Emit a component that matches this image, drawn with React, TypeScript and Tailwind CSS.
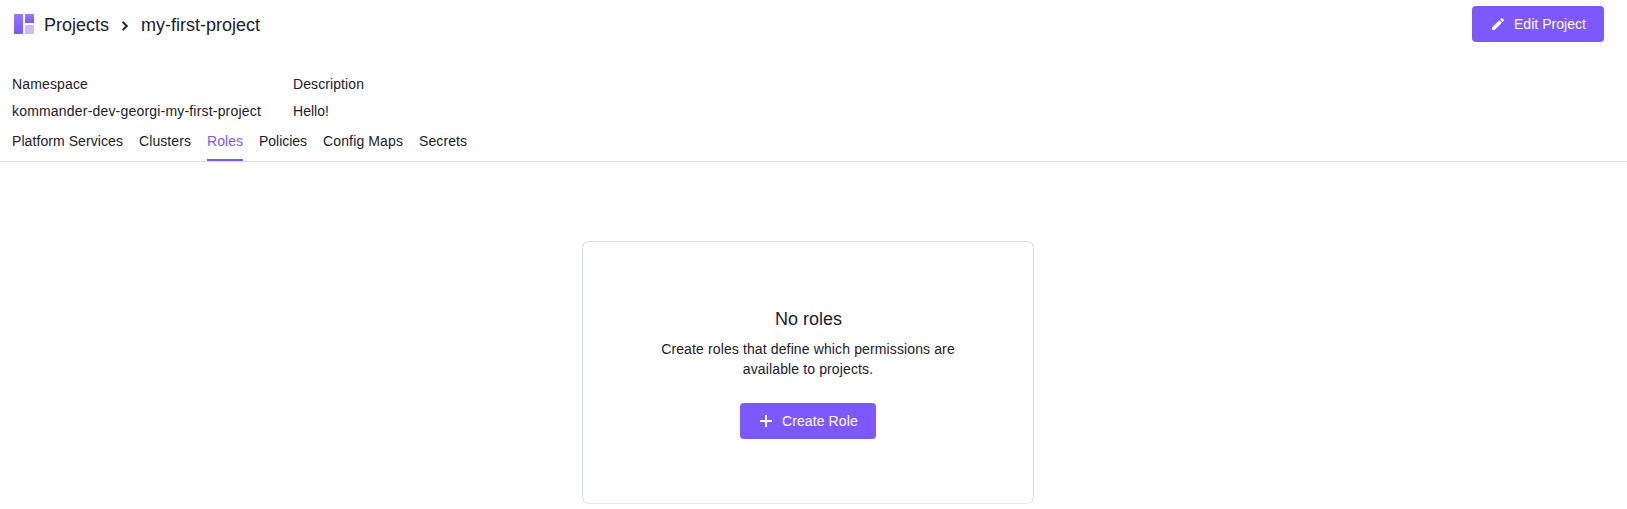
const tabs = [
  { label: "Platform Services", tracking: "tracking-[0.077px]" },
  { label: "Clusters", tracking: "tracking-[0.083px]" },
  { label: "Roles", tracking: "tracking-[0.04px]", active: true },
  { label: "Policies", tracking: "tracking-[-0.03px]" },
  { label: "Config Maps", tracking: "tracking-[0.13px]" },
  { label: "Secrets", tracking: "tracking-[0.077px]" },
];

export default function App() {
  return (
    <div className="h-[509px] w-full overflow-hidden bg-white font-['Liberation_Sans',Arial,sans-serif] text-sm leading-5 text-[#1b2029]">
      <header className="flex h-12 items-center justify-between pl-3 pr-[23px]">
        <div className="flex items-center text-lg">
          <svg className="mr-2 size-6" viewBox="0 0 24 24">
            <defs>
              <linearGradient id="tile" x1="0" y1="0" x2="0" y2="1">
                <stop offset="0" stopColor="#9776FF" />
                <stop offset="1" stopColor="#7D58FF" />
              </linearGradient>
            </defs>
            <rect x="2" y="2" width="9" height="20" rx="0.4" fill="url(#tile)" />
            <rect x="13" y="2" width="9" height="9" rx="0.4" fill="url(#tile)" />
            <rect x="13" y="13" width="9" height="9" rx="0.4" fill="#cbbcff" />
          </svg>
          <span className="pt-0.5">Projects</span>
          <svg className="mx-2 mt-1 size-4" viewBox="0 0 16 16" fill="none" stroke="#1b2029" strokeWidth="2">
            <path d="M5.6 3.9 9.8 8l-4.2 4.1" />
          </svg>
          <span className="pt-0.5">my-first-project</span>
        </div>
        <button className="flex h-9 w-[132px] items-center gap-2 rounded bg-[#7d58ff] pl-[18px] tracking-[0.035px] text-white">
          <svg className="size-4" viewBox="0 0 16 16" fill="currentColor">
            <path d="M2 11.5V14h2.5l7.37-7.37-2.5-2.5zM13.8 4.7a.67.67 0 0 0 0-.94L12.24 2.2a.67.67 0 0 0-.94 0l-1.22 1.22 2.5 2.5z" />
          </svg>
          Edit Project
        </button>
      </header>
      <dl className="mt-[26px] flex gap-8 pl-3">
        <div className="flex w-[249px] flex-col gap-[7px]">
          <dt className="tracking-[0.146px]">Namespace</dt>
          <dd className="whitespace-nowrap tracking-[0.19px]">kommander-dev-georgi-my-first-project</dd>
        </div>
        <div className="flex flex-col gap-[7px]">
          <dt className="tracking-[0.09px]">Description</dt>
          <dd className="tracking-[0.03px]">Hello!</dd>
        </div>
      </dl>
      <nav className="mt-[10px] flex h-[31px] gap-4 border-b border-[#dadde2] pl-3">
        {tabs.map((t) => (
          <a key={t.label} className={`h-[30px] ${t.tracking} ${t.active ? "border-b-2 border-[#7d58ff] text-[#7d58ff]" : ""}`}>
            {t.label}
          </a>
        ))}
      </nav>
      <main className="mt-[79px] flex justify-center pr-[11px]">
        <section className="flex h-[263px] w-[452px] flex-col items-center rounded-[7px] border border-[#dadde2] border-b-[#e8e9ec] pt-[63px] text-center">
          <h2 className="pl-px text-lg leading-7">No roles</h2>
          <p className="mt-1.5 w-[310px] tracking-[0.125px]">Create roles that define which permissions are available to projects.</p>
          <button className="mt-6 flex h-9 w-[136px] items-center gap-2 rounded bg-[#7d58ff] pl-[18px] tracking-[0.1px] text-white">
            <svg className="size-4" viewBox="0 0 16 16" stroke="currentColor" strokeWidth="2">
              <path d="M8 2v12M2 8h12" />
            </svg>
            Create Role
          </button>
        </section>
      </main>
    </div>
  );
}
